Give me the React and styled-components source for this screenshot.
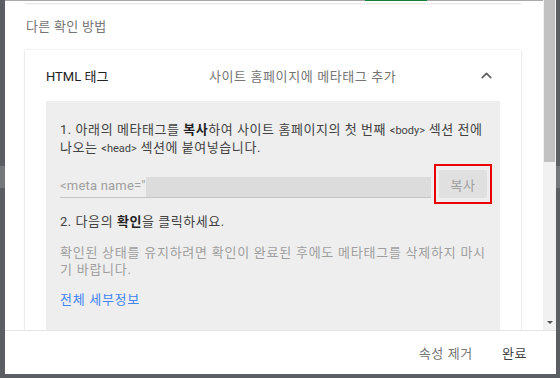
import styled, { createGlobalStyle } from "styled-components";
import { ChevronUp } from "lucide-react";

const GlobalStyle = createGlobalStyle`
  body {
    margin: 0;
    overflow: hidden;
    font-family: Roboto, "Noto Sans CJK KR", sans-serif;
  }
`;

const App = () => {
  return (
    <Backdrop>
      <GlobalStyle />
      <Dialog>
        <ScrollArea>
          <Content>
            <TopEdge>
              <TabIndicator />
            </TopEdge>
            <PrevCardEdge />
            <SectionTitle>다른 확인 방법</SectionTitle>
            <Card>
              <CardHeader>
                <CardTitle>HTML 태그</CardTitle>
                <CardSubtitle>사이트 홈페이지에 메타태그 추가</CardSubtitle>
                <ChevronUp size={17} strokeWidth={2.4} color="#616161" />
              </CardHeader>
              <Panel>
                <Step>
                  1. 아래의 메타태그를 <b>복사</b>하여 사이트 홈페이지의 첫 번째{" "}
                  <Code>&lt;body&gt;</Code> 섹션 전에 나오는{" "}
                  <Code>&lt;head&gt;</Code> 섹션에 붙여넣습니다.
                </Step>
                <CopyRow>
                  <MetaField>
                    <Placeholder>&lt;meta name="</Placeholder>
                    <Masked />
                  </MetaField>
                  <CopyButton>복사</CopyButton>
                </CopyRow>
                <Step $gap={15}>
                  2. 다음의 <b>확인</b>을 클릭하세요.
                </Step>
                <Note>
                  확인된 상태를 유지하려면 확인이 완료된 후에도 메타태그를 삭제하지
                  마시기 바랍니다.
                </Note>
                <DetailsLink>전체 세부정보</DetailsLink>
              </Panel>
            </Card>
          </Content>
          <Scrollbar>
            <Thumb />
            <DownArrow />
          </Scrollbar>
        </ScrollArea>
        <Footer>
          <FooterButton>속성 제거</FooterButton>
          <FooterButton $primary>완료</FooterButton>
        </Footer>
      </Dialog>
    </Backdrop>
  );
};

export default App;

const Backdrop = styled.div`
  width: 560px;
  height: 378px;
  box-sizing: border-box;
  padding: 0 4px 4px 5px;
  background: linear-gradient(
    to bottom,
    #5b5f64 0,
    #5b5f64 166px,
    #75787b 166px,
    #75787b 188px,
    #5b5f64 188px
  );
  display: flex;
`;

const Dialog = styled.div`
  flex: 1;
  background: #fff;
  display: flex;
  flex-direction: column;
`;

const ScrollArea = styled.div`
  height: 330px;
  display: flex;
  overflow: hidden;
`;

const Content = styled.div`
  flex: 1;
  display: flex;
  flex-direction: column;
  overflow: hidden;
`;

const TopEdge = styled.div`
  height: 1px;
  background: #a8a8a8;
  position: relative;
`;

const TabIndicator = styled.div`
  position: absolute;
  left: 360px;
  width: 62px;
  top: 0;
  height: 1px;
  background: #188038;
`;

const PrevCardEdge = styled.div`
  height: 2px;
  margin: 0 22px 0 20px;
  background: #fff;
  box-shadow: 0 1px 2px rgba(0, 0, 0, 0.12);
`;

const SectionTitle = styled.div`
  margin: 15px 0 0 21px;
  font-size: 13px;
  line-height: 17px;
  letter-spacing: 0.3px;
  color: #757575;
`;

const Card = styled.div`
  margin: 15px 22px 0 20px;
  background: #fff;
  box-shadow: 0 0 2px rgba(0, 0, 0, 0.14), 0 1px 2px rgba(0, 0, 0, 0.1);
  display: flex;
  flex-direction: column;
  flex: 1;
`;

const CardHeader = styled.div`
  height: 51px;
  display: grid;
  grid-template-columns: 163px 1fr auto;
  align-items: center;
  padding: 0 26px 0 21px;
`;

const CardTitle = styled.div`
  font-size: 13px;
  color: #212121;
`;

const CardSubtitle = styled.div`
  font-size: 13px;
  letter-spacing: 0.6px;
  color: #757575;
`;

const Panel = styled.div`
  flex: 1;
  margin: 0 21px;
  background: #eeeeee;
  padding: 20px 13px 0 14px;
`;

const Step = styled.div`
  margin-top: ${(p) => (p.$gap ? `${p.$gap}px` : "0")};
  font-size: 13px;
  line-height: 17px;
  letter-spacing: 0.55px;
  color: #424242;

  b {
    font-weight: 700;
    color: #212121;
  }
`;

const Code = styled.span`
  font-size: 11px;
  letter-spacing: 0;
`;

const CopyRow = styled.div`
  margin-top: 13px;
  display: flex;
  align-items: flex-end;
  gap: 8px;
`;

const MetaField = styled.div`
  flex: 1;
  height: 28px;
  display: flex;
  align-items: flex-end;
  border-bottom: 1px solid #c4c4c4;
  box-sizing: border-box;
`;

const Placeholder = styled.span`
  font-size: 13px;
  line-height: 20px;
  letter-spacing: 0.2px;
  color: #9e9e9e;
  padding-bottom: 1px;
`;

const Masked = styled.div`
  flex: 1;
  height: 20px;
  background: #dcdcdc;
`;

const CopyButton = styled.div`
  position: relative;
  width: 48px;
  height: 28px;
  display: flex;
  align-items: center;
  justify-content: center;
  border-radius: 2px;
  background: #e0e0e0;
  color: #9e9e9e;
  font-size: 13px;
  letter-spacing: 0.6px;

  &::after {
    content: "";
    position: absolute;
    inset: -6px -5px -6px -5px;
    border: 2px solid #e80000;
  }
`;

const Note = styled.div`
  margin-top: 14px;
  font-size: 13px;
  line-height: 17px;
  letter-spacing: 0.75px;
  color: #9e9e9e;
`;

const DetailsLink = styled.div`
  margin-top: 13px;
  font-size: 13px;
  line-height: 17px;
  letter-spacing: 0.7px;
  color: #4285f4;
`;

const Scrollbar = styled.div`
  width: 13px;
  background: #f1f1f1;
  display: flex;
  flex-direction: column;
  align-items: center;
  justify-content: space-between;
`;

const Thumb = styled.div`
  width: 11px;
  height: 162px;
  background: #c1c1c1;
`;

const DownArrow = styled.div`
  width: 0;
  height: 0;
  margin-bottom: 6px;
  border-left: 3px solid transparent;
  border-right: 3px solid transparent;
  border-top: 3px solid #505050;
`;

const Footer = styled.div`
  height: 44px;
  box-sizing: border-box;
  border-top: 1px solid #e4e4e4;
  display: flex;
  align-items: center;
  justify-content: flex-end;
  gap: 29px;
  padding: 0 29px 0 0;
`;

const FooterButton = styled.div`
  font-size: 13px;
  letter-spacing: 0.6px;
  color: ${(p) => (p.$primary ? "#424242" : "#757575")};
`;
